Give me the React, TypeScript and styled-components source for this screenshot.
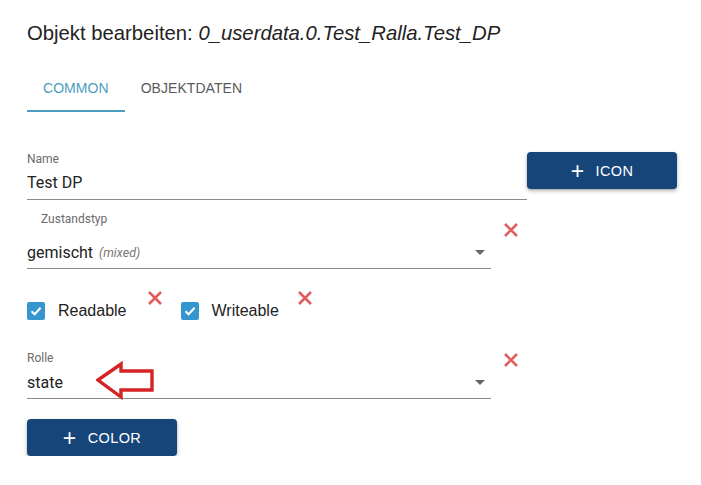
import React from 'react'
import styled, { createGlobalStyle } from 'styled-components'

const GlobalStyle = createGlobalStyle`
  body {
    margin: 0;
    background: #fff;
    font-family: 'Liberation Sans', Arial, sans-serif;
  }
`

const Page = styled.div`
  padding: 21px 27px 0;
  display: flex;
  flex-direction: column;
`

const Title = styled.h2`
  margin: 0;
  font-size: 20.3px;
  line-height: 24px;
  font-weight: 400;
  color: #222;
`

const ObjectId = styled.span`
  font-style: italic;
`

const Tabs = styled.div`
  display: flex;
  margin-top: 19px;
  height: 48px;
`

const Tab = styled.div<{ $active?: boolean }>`
  padding: 2px 16px 0;
  display: flex;
  align-items: center;
  font-size: 14px;
  letter-spacing: 0.05px;
  color: ${(p) => (p.$active ? '#4c9cbf' : '#5a5a5a')};
  border-bottom: 2px solid ${(p) => (p.$active ? '#4c9cbf' : 'transparent')};
  box-sizing: border-box;
`

const Row = styled.div<{ $top: number }>`
  display: flex;
  align-items: flex-start;
  margin-top: ${(p) => p.$top}px;
`

const Field = styled.div<{ $width: number }>`
  position: relative;
  flex-shrink: 0;
  width: ${(p) => p.$width}px;
  display: flex;
  flex-direction: column;
  border-bottom: 1px solid #8c8c8c;
  font-family: Roboto, 'Liberation Sans', sans-serif;
`

const Label = styled.div<{ $indent?: number; $gap: number }>`
  font-size: 12px;
  line-height: 14px;
  color: #6b6b6b;
  padding-left: ${(p) => p.$indent ?? 0}px;
  margin-bottom: ${(p) => p.$gap}px;
`

const Value = styled.div<{ $after: number }>`
  display: flex;
  align-items: center;
  height: 26px;
  margin-bottom: ${(p) => p.$after}px;
  font-size: 16px;
  color: #222;
`

const Hint = styled.span`
  font-size: 12.5px;
  font-style: italic;
  color: #777;
  margin-left: 6px;
`

const Caret = styled.span`
  margin-left: auto;
  margin-right: 6px;
  width: 0;
  height: 0;
  border-left: 5px solid transparent;
  border-right: 5px solid transparent;
  border-top: 5px solid #666;
`

const Button = styled.button`
  flex-shrink: 0;
  width: 150px;
  height: 37px;
  border: 0;
  border-radius: 4px;
  background: #164579;
  color: #fff;
  font-family: 'Liberation Sans', Arial, sans-serif;
  font-size: 14.5px;
  letter-spacing: 0.4px;
  display: flex;
  align-items: center;
  justify-content: center;
  gap: 11px;
  box-shadow: 0 2px 4px rgba(0, 0, 0, 0.25), 0 1px 2px rgba(0, 0, 0, 0.15);
`

const Plus = styled.span`
  font-size: 23px;
  line-height: 20px;
  font-weight: 300;
`

const Remove = styled.span<{ $dx: number; $dy: number }>`
  display: inline-flex;
  margin-left: ${(p) => p.$dx}px;
  margin-top: ${(p) => p.$dy}px;
`

const Check = styled.label<{ $dx?: number }>`
  display: flex;
  align-items: center;
  gap: 13px;
  font-size: 16px;
  line-height: 20px;
  color: #222;
  margin-top: 11px;
  margin-left: ${(p) => p.$dx ?? 0}px;
`

const Box = styled.span`
  width: 18px;
  height: 18px;
  border-radius: 2px;
  background: #3595cf;
  display: inline-flex;
  align-items: center;
  justify-content: center;
`

const Pointer = styled.svg`
  position: absolute;
  left: 69px;
  top: 10px;
`

const Cross = () => (
  <svg width="16" height="16" viewBox="0 0 16 16">
    <path d="M2 2 L14 14 M14 2 L2 14" stroke="#e35c5c" strokeWidth="2.6" />
  </svg>
)

const Tick = () => (
  <svg width="14" height="14" viewBox="0 0 14 14">
    <path d="M2.5 7.2 L5.6 10.2 L11.6 3.8" stroke="#fff" strokeWidth="2" fill="none" />
  </svg>
)

export default function App() {
  return (
    <Page>
      <GlobalStyle />
      <Title>
        Objekt bearbeiten: <ObjectId>0_userdata.0.Test_Ralla.Test_DP</ObjectId>
      </Title>
      <Tabs>
        <Tab $active>COMMON</Tab>
        <Tab>OBJEKTDATEN</Tab>
      </Tabs>

      <Row $top={40}>
        <Field $width={500}>
          <Label $gap={3}>Name</Label>
          <Value $after={4}>Test DP</Value>
        </Field>
        <Button>
          <Plus>+</Plus> ICON
        </Button>
      </Row>

      <Row $top={12}>
        <Field $width={464}>
          <Label $indent={14} $gap={13}>Zustandstyp</Label>
          <Value $after={3}>
            gemischt <Hint>(mixed)</Hint>
            <Caret />
          </Value>
        </Field>
        <Remove $dx={12} $dy={10}>
          <Cross />
        </Remove>
      </Row>

      <Row $top={21}>
        <Check>
          <Box>
            <Tick />
          </Box>
          Readable
        </Check>
        <Remove $dx={20} $dy={0}>
          <Cross />
        </Remove>
        <Check $dx={18}>
          <Box>
            <Tick />
          </Box>
          Writeable
        </Check>
        <Remove $dx={18} $dy={0}>
          <Cross />
        </Remove>
      </Row>

      <Row $top={30}>
        <Field $width={464}>
          <Label $gap={4}>Rolle</Label>
          <Value $after={3}>
            state
            <Caret />
          </Value>
          <Pointer width="60" height="40" viewBox="0 0 60 40">
            <path
              d="M2 19 L25 3 L25 10 L56 10 L56 29 L25 29 L25 36 Z"
              fill="none"
              stroke="#d42424"
              strokeWidth="3.4"
            />
          </Pointer>
        </Field>
        <Remove $dx={12} $dy={1}>
          <Cross />
        </Remove>
      </Row>

      <Row $top={20}>
        <Button>
          <Plus>+</Plus> COLOR
        </Button>
      </Row>
    </Page>
  )
}
